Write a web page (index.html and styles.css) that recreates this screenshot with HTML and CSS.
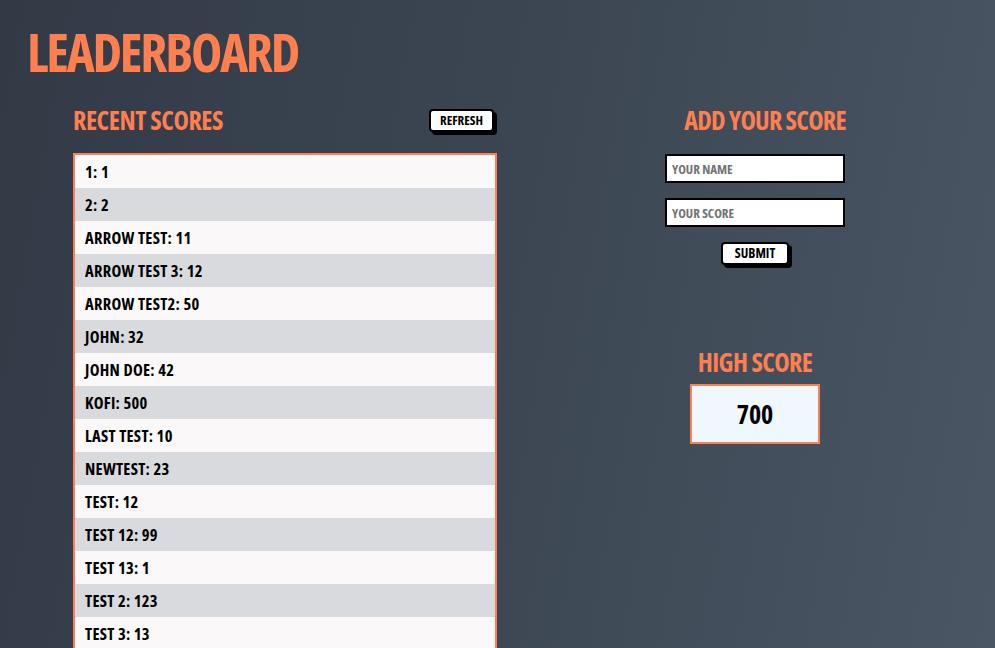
FILE: index.html
```html
<!DOCTYPE html>
<html>
<head>
<meta charset="utf-8">
<link rel="stylesheet" href="styles.css">
</head>
<body>
<h1 class="title">Leaderboard</h1>
<main class="layout">
  <section class="recent">
    <div class="recent-head">
      <h2 class="heading">Recent scores</h2>
      <button class="btn btn-refresh">Refresh</button>
    </div>
    <ul class="scores">
      <li>1: 1</li>
      <li>2: 2</li>
      <li>Arrow test: 11</li>
      <li>Arrow test 3: 12</li>
      <li>Arrow test2: 50</li>
      <li>John: 32</li>
      <li>John Doe: 42</li>
      <li>Kofi: 500</li>
      <li>Last test: 10</li>
      <li>newtest: 23</li>
      <li>test: 12</li>
      <li>test 12: 99</li>
      <li>test 13: 1</li>
      <li>test 2: 123</li>
      <li>test 3: 13</li>
    </ul>
  </section>
  <section class="side">
    <h2 class="heading add">Add your score</h2>
    <form class="form">
      <input class="field" type="text" placeholder="Your name">
      <input class="field" type="text" placeholder="Your score">
      <button class="btn btn-submit" type="button">Submit</button>
    </form>
    <h2 class="heading high">High score</h2>
    <div class="high-box">700</div>
  </section>
</main>
</body>
</html>
```
FILE: styles.css
```css
html, body {
  margin: 0;
  height: 100%;
  overflow: hidden;
}
body {
  background: linear-gradient(100deg, #323a46 0%, #3c4653 50%, #4a5664 100%);
  font-family: "Open Sans", "Roboto Condensed", sans-serif;
  font-stretch: 75%;
  font-weight: 700;
  text-transform: uppercase;
  color: #000;
}
.title {
  margin: 0;
  padding: 20px 0 0 27px;
  font-size: 53px;
  line-height: 64px;
  letter-spacing: -2.2px;
  color: #ff7f4f;
}
.layout {
  display: grid;
  grid-template-columns: 424px 180px;
  column-gap: 168px;
  padding: 22px 0 0 73px;
}
.heading {
  margin: 0;
  font-size: 26px;
  line-height: 28px;
  letter-spacing: -0.4px;
  color: #ff7f4f;
  white-space: nowrap;
}
.recent-head {
  display: flex;
  justify-content: space-between;
  align-items: center;
  height: 28px;
  padding-right: 3px;
}
.btn {
  font-family: inherit;
  font-stretch: 75%;
  font-weight: 700;
  text-transform: uppercase;
  font-size: 13.5px;
  letter-spacing: 0;
  background: #fff;
  color: #000;
  border: 2px solid #000;
  border-radius: 4px;
  box-shadow: 3px 3px 0 #000;
  padding: 0 11px;
  height: 23px;
  line-height: 19px;
}
.btn-refresh {
  padding: 0 9px;
  font-size: 13px;
}
.btn-submit {
  padding: 0 12px;
}
.scores {
  list-style: none;
  margin: 19px 0 0;
  padding: 0;
  border: 2px solid #ff7f4f;
  border-bottom: none;
}
.scores li {
  height: 33px;
  line-height: 33px;
  padding-left: 10px;
  font-size: 16.5px;
  letter-spacing: 0.3px;
  background: #faf8f8;
}
.scores li:nth-child(even) {
  background: #d9dadd;
}
.side {
  display: flex;
  flex-direction: column;
  align-items: center;
}
.add {
  padding-left: 20px;
  letter-spacing: -0.7px;
}
.form {
  display: flex;
  flex-direction: column;
  align-items: center;
  gap: 15px;
  margin-top: 20px;
}
.field {
  box-sizing: border-box;
  width: 180px;
  height: 29px;
  border: 2px solid #000;
  background: #fff;
  padding: 0 5px;
  font-family: inherit;
  font-stretch: 75%;
  font-weight: 700;
  font-size: 13px;
  letter-spacing: 0;
  text-transform: uppercase;
}
.field::placeholder {
  color: #737373;
}
.high {
  margin-top: 83px;
  letter-spacing: -0.6px;
}
.high-box {
  box-sizing: border-box;
  margin-top: 8px;
  width: 130px;
  height: 60px;
  border: 2px solid #ff7f4f;
  background: #f0f8ff;
  display: flex;
  align-items: center;
  justify-content: center;
  font-size: 26px;
}
```
